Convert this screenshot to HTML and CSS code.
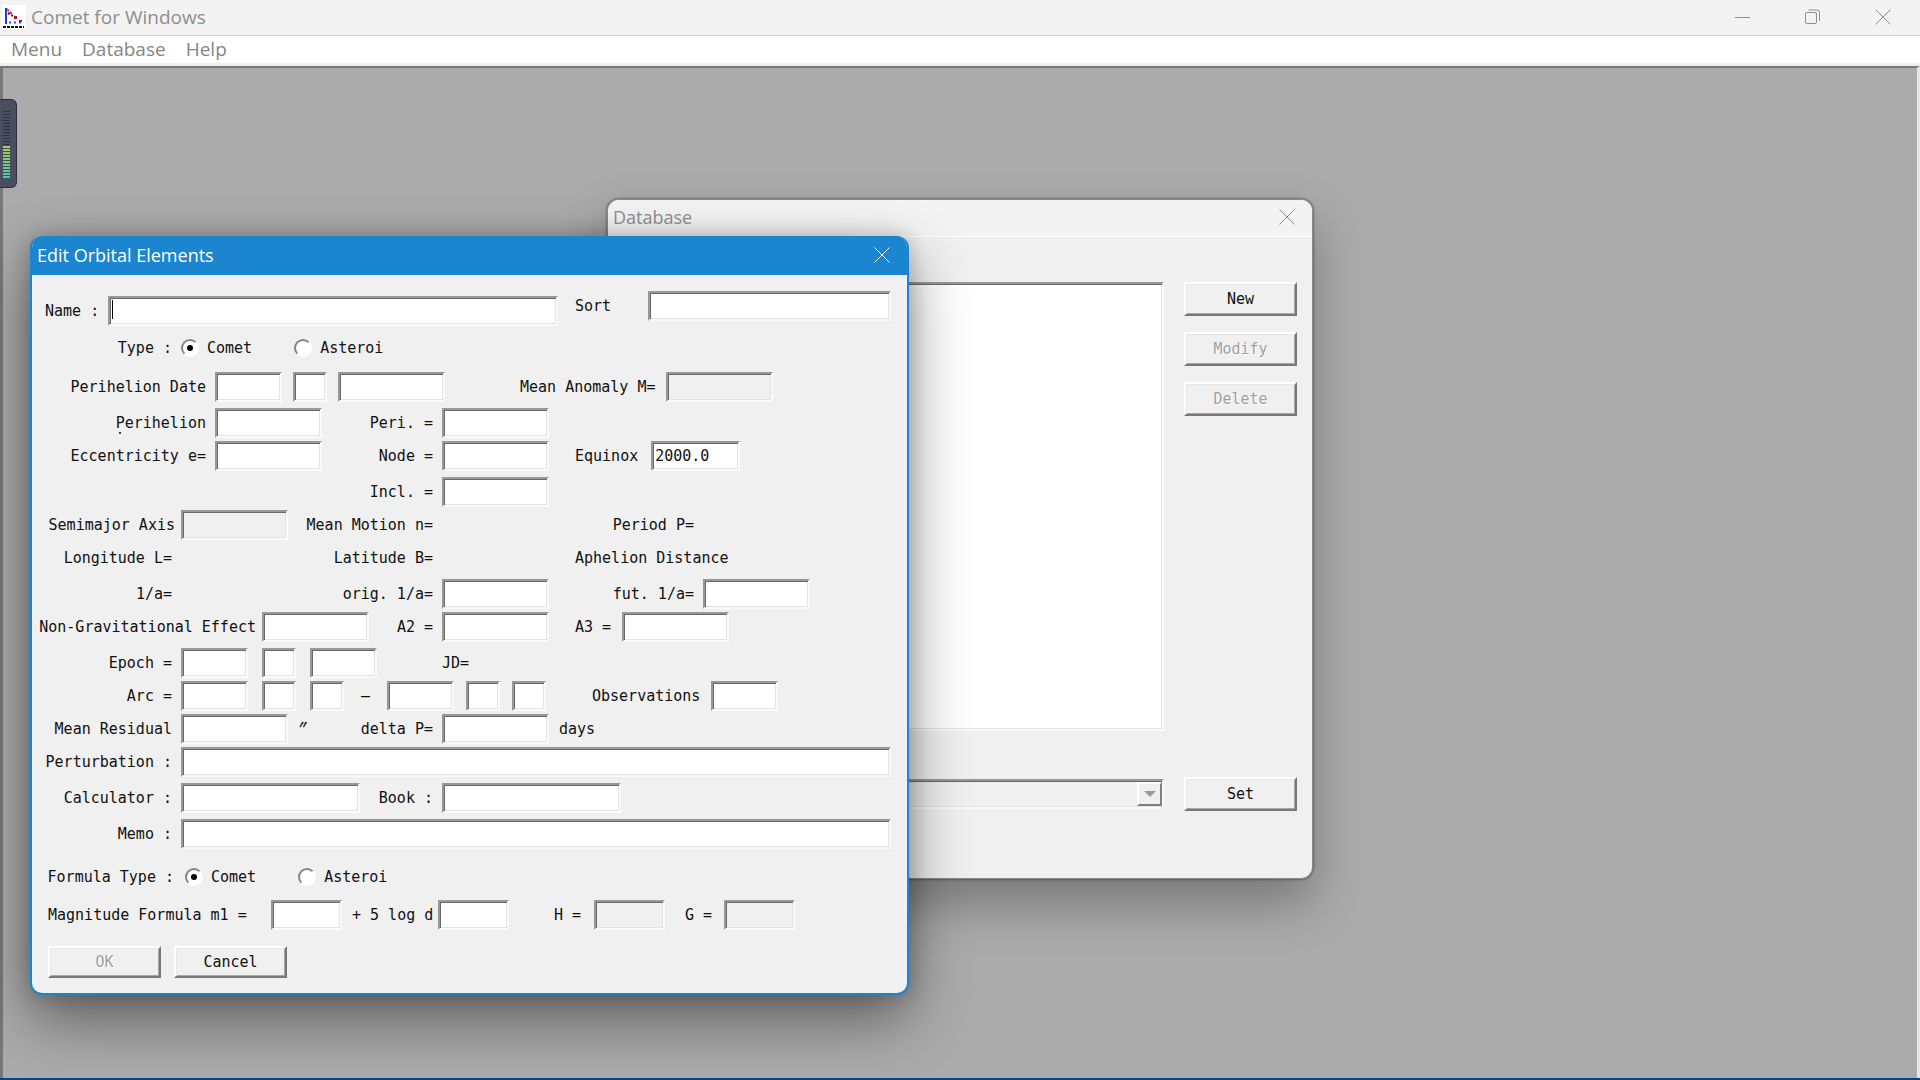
FILE: index.html
```html
<!DOCTYPE html>
<html lang="en">
<head>
<meta charset="utf-8">
<title>Comet for Windows</title>
<link rel="stylesheet" href="styles.css">
</head>
<body>
<div class="app">
  <header class="app-title">
    <svg class="app-icon" width="24" height="24" viewBox="0 0 24 24" aria-hidden="true">
      <path fill="#fff" d="M0 0h24v24H0z"/>
      <path stroke="#2a2af0" stroke-width="2" d="M4 3v16"/>
      <path stroke="#4040ff" stroke-width="2" stroke-dasharray="2 3" d="M7 17.500h12"/>
      <path stroke="#f03040" stroke-width="2" stroke-dasharray="3 1" d="M5 4l5 5"/>
      <path stroke="#402" stroke-width="2" stroke-dasharray="2 2" d="M6 8l5 3"/>
      <path fill="#c01020" d="M12 11h3v3h-3zM17 15h3v2h-3z"/>
      <path stroke="#111" stroke-width="2" stroke-dasharray="3 1" d="M1 22h21"/>
    </svg>
    <h1 class="title-text">Comet for Windows</h1>
    <div class="window-controls">
      <button class="icon-button" aria-label="Minimize"><svg width="16" height="16" viewBox="0 0 16 16"><path d="M0 8.500h15"/></svg></button>
      <button class="icon-button" aria-label="Restore"><svg width="16" height="16" viewBox="0 0 16 16"><rect x=".5" y="3.500" width="11" height="11" rx="1.500"/><path d="M3.500 1h8.500q2.500 0 2.500 2.500V12"/></svg></button>
      <button class="icon-button" aria-label="Close"><svg width="16" height="16" viewBox="0 0 16 16"><path d="M.5.5l15 15M15.500.5l-15 15"/></svg></button>
    </div>
  </header>
  <nav class="menu-bar">
    <a href="#menu">Menu</a>
    <a href="#database">Database</a>
    <a href="#help">Help</a>
  </nav>
  <main class="workspace"></main>
</div>

<div class="level-meter" aria-hidden="true"><span class="level-off"></span><span class="level-on"></span></div>

<section class="window database">
  <header class="window-title">
    <h2 class="title-text">Database</h2>
    <button class="icon-button" aria-label="Close"><svg width="16" height="16" viewBox="0 0 16 16"><path d="M.5.5l15 15M15.500.5l-15 15"/></svg></button>
  </header>
  <div class="database-body">
    <div class="sunken list"></div>
    <div class="button-stack">
      <button class="push">New</button>
      <button class="push" disabled>Modify</button>
      <button class="push" disabled>Delete</button>
    </div>
    <div class="combo">
      <select class="sunken combo-select" aria-label="Database file" disabled><option></option></select>
      <span class="combo-arrow"><svg width="12" height="6" viewBox="0 0 12 6"><path d="M0 0h12L6 6z"/></svg></span>
    </div>
    <button class="push">Set</button>
  </div>
</section>

<section class="window editor">
  <header class="window-title">
    <h2 class="title-text">Edit Orbital Elements</h2>
    <button class="icon-button" aria-label="Close"><svg width="16" height="16" viewBox="0 0 16 16"><path d="M.5.5l15 15M15.500.5l-15 15"/></svg></button>
  </header>
  <form class="form">
    <div class="row row-name">
      <div class="name-group"><label for="name">Name :</label><input id="name" class="sunken grow caret"></div>
      <label class="sort-label" for="sort">Sort</label><input id="sort" class="sunken sort">
    </div>
    <div class="row row-type">
      <span class="lead">Type :</span>
      <div class="radios">
        <label class="radio"><input type="radio" name="type" checked>Comet</label>
        <label class="radio"><input type="radio" name="type">Asteroi</label>
      </div>
    </div>
    <div class="row tall">
      <div class="date-group">
        <label class="lead wide" for="py">Perihelion Date</label>
        <div class="parts date-parts"><input id="py" class="sunken w-s"><input class="sunken w-xs" aria-label="Month"><input class="sunken w-m" aria-label="Day"></div>
      </div>
      <label class="end" for="mean">Mean Anomaly M=</label><input id="mean" class="sunken w-m" disabled>
    </div>
    <div class="row">
      <div class="left"><label class="lead wide speck" for="q">Perihelion</label><input id="q" class="sunken w-m"><label class="end" for="peri">Peri. =</label></div>
      <input id="peri" class="sunken w-m">
    </div>
    <div class="row tall">
      <div class="left"><label class="lead wide" for="ecc">Eccentricity e=</label><input id="ecc" class="sunken w-m"><label class="end" for="node">Node =</label></div>
      <div class="mid"><input id="node" class="sunken w-m"></div>
      <label class="gap-m" for="equinox">Equinox</label><input id="equinox" class="sunken w-eq" value="2000.0">
    </div>
    <div class="row">
      <div class="left"><label class="end" for="incl">Incl. =</label></div>
      <input id="incl" class="sunken w-m">
    </div>
    <div class="row">
      <div class="left"><label class="lead snug" for="axis">Semimajor Axis</label><input id="axis" class="sunken w-m" disabled><span class="end">Mean Motion n=</span></div>
      <div class="mid"></div>
      <span class="third">Period P=</span>
    </div>
    <div class="row tall">
      <div class="left"><span class="lead">Longitude L=</span><span class="end">Latitude B=</span></div>
      <div class="mid"></div>
      <span>Aphelion Distance</span>
    </div>
    <div class="row">
      <div class="left"><span class="lead">1/a=</span><label class="end" for="orig">orig. 1/a=</label></div>
      <div class="mid"><input id="orig" class="sunken w-m"></div>
      <label class="third" for="fut">fut. 1/a=</label><input id="fut" class="sunken w-m">
    </div>
    <div class="row tall">
      <div class="left"><label class="lead snug widest" for="a1">Non-Gravitational Effect</label><input id="a1" class="sunken w-m"><label class="end" for="a2">A2 =</label></div>
      <div class="mid"><input id="a2" class="sunken w-m"></div>
      <label class="end" for="a3">A3 =</label><input id="a3" class="sunken w-m">
    </div>
    <div class="row">
      <div class="left"><label class="lead" for="ey">Epoch =</label>
        <div class="parts"><input id="ey" class="sunken w-s"><input class="sunken w-xs" aria-label="Month"><input class="sunken w-s" aria-label="Day"></div></div>
      <span>JD=</span>
    </div>
    <div class="row">
      <div class="arc">
        <label class="lead" for="ay">Arc =</label>
        <div class="parts"><input id="ay" class="sunken w-s"><input class="sunken w-xs" aria-label="Start month"><input class="sunken w-xs" aria-label="Start day"><span class="dash">–</span>
          <div class="parts close"><input class="sunken w-s" aria-label="End year"><input class="sunken w-xs" aria-label="End month"><input class="sunken w-xs" aria-label="End day"></div></div>
      </div>
      <label class="end obs" for="obs">Observations</label><input id="obs" class="sunken w-s">
    </div>
    <div class="row">
      <div class="left"><label class="lead" for="res">Mean Residual</label><input id="res" class="sunken w-m"><span class="unit seconds">″</span><label class="end" for="dp">delta P=</label></div>
      <input id="dp" class="sunken w-m"><span class="unit">days</span>
    </div>
    <div class="row tall">
      <label class="lead" for="pert">Perturbation :</label><input id="pert" class="sunken grow">
    </div>
    <div class="row tall">
      <div class="left"><label class="lead" for="calc">Calculator :</label><input id="calc" class="sunken w-l"><label class="end" for="book">Book :</label></div>
      <input id="book" class="sunken w-l">
    </div>
    <div class="row row-memo">
      <label class="lead" for="memo">Memo :</label><input id="memo" class="sunken grow">
    </div>
    <div class="row row-formula">
      <span class="lead formula">Formula Type :</span>
      <div class="radios">
        <label class="radio"><input type="radio" name="formula" checked>Comet</label>
        <label class="radio"><input type="radio" name="formula">Asteroi</label>
      </div>
    </div>
    <div class="row row-magnitude">
      <label class="m1" for="m1">Magnitude Formula m1 =</label><input id="m1" class="sunken w-mag">
      <label class="log" for="log">+ 5 log d</label><input id="log" class="sunken w-mag">
      <label class="h" for="h">H =</label><input id="h" class="sunken w-mag" disabled>
      <label class="g" for="g">G =</label><input id="g" class="sunken w-mag" disabled>
    </div>
    <div class="actions">
      <button type="button" class="push" disabled>OK</button>
      <button type="button" class="push">Cancel</button>
    </div>
  </form>
</section>
</body>
</html>
```
FILE: styles.css
```css
* { box-sizing: border-box; }

body {
  margin: 0;
  font: 15px/20px "DejaVu Sans Mono", "Liberation Mono", monospace;
  color: #111;
}

button, input, select { font: inherit; color: inherit; margin: 0; }

/* Main application window */
.app {
  display: flex;
  flex-direction: column;
  height: 100vh;
  border-bottom: 2px solid #00468c;
}

.app-title {
  display: flex;
  align-items: center;
  height: 36px;
  padding: 0 0 2px 2px;
  background: #f3f3f3;
  border-bottom: 1px solid #cfcfcf;
  color: #8e8e8e;
}

.app-icon { margin-right: 5px; }

.title-text {
  flex: 1;
  margin: 0;
  font: 19px/28px "Open Sans", "Noto Sans", sans-serif;
}

.window-controls { display: flex; gap: 24px; padding-right: 14px; }

.icon-button {
  display: grid;
  place-items: center;
  width: 46px;
  height: 30px;
  padding: 0;
  border: 0;
  background: none;
}

.icon-button svg { fill: none; stroke: currentColor; stroke-width: 1; }

.menu-bar {
  display: flex;
  gap: 20px;
  height: 30px;
  padding: 0 11px;
  border-bottom: 3px solid #efefef;
  background: #fff;
  font: 19px/26px "Open Sans", "Noto Sans", sans-serif;
}

.menu-bar a { color: #858585; text-decoration: none; }

.workspace {
  flex: 1;
  border: solid #787878;
  border-width: 2px 0 0 3px;
  border-right: 3px solid #e6e6e6;
  background: #ababab;
}

.level-meter {
  position: absolute;
  top: 99px;
  left: 0;
  display: flex;
  flex-direction: column;
  width: 17px;
  height: 89px;
  padding: 11px 6px 9px 3px;
  border: 1px solid #2b2f3c;
  border-left: 0;
  border-radius: 0 6px 6px 0;
  background: #4a4f60;
}

.level-off { height: 35px; background: repeating-linear-gradient(#2f3340 0 1px, transparent 1px 3px); }
.level-on {
  flex: 1;
  background:
    repeating-linear-gradient(transparent 0 2px, #454a5a 2px 3px),
    linear-gradient(#b4c850, #46c8b4);
}

/* Floating windows */
.window { position: absolute; overflow: hidden; background: #f0f0f0; }

.window-title { display: flex; align-items: center; padding: 0 2px 2px 5px; }
.window-title .title-text { font-size: 18px; }

.database {
  top: 199px;
  left: 607px;
  width: 706px;
  border: 1px solid #8a8a8a;
  border-radius: 12px;
  box-shadow: 0 0 2px 1px rgba(0, 0, 0, .3), 0 24px 50px rgba(0, 0, 0, .3);
}

.database .window-title {
  height: 37px;
  background: #f3f3f3;
  border-bottom: 1px solid #fff;
  color: #8e8e8e;
}

.database-body {
  display: grid;
  grid-template-columns: 1fr 113px;
  gap: 46px 20px;
  padding: 45px 15px 67px 40px;
}

.button-stack { display: flex; flex-direction: column; gap: 16px; }

.combo { position: relative; display: flex; align-items: center; }
.combo-select { flex: 1; appearance: none; }
.combo-arrow {
  position: absolute;
  top: 5px;
  right: 2px;
  display: grid;
  place-items: center;
  width: 25px;
  height: 24px;
  border: 2px solid;
  border-color: #fff #808080 #808080 #fff;
  background: #f0f0f0;
}
.combo-arrow svg { fill: #9a9a9a; }

.editor {
  top: 236px;
  left: 30px;
  width: 879px;
  border: 2px solid #1b85cf;
  border-top: 0;
  border-radius: 12px;
  box-shadow: 0 24px 60px rgba(0, 0, 0, .45), 0 0 20px rgba(0, 0, 0, .2);
}

.editor .window-title { height: 39px; background: #1b85cf; color: #fff; }

/* Bevelled controls */
.sunken {
  height: 30px;
  padding: 0 2px;
  border: 2px solid;
  border-color: #989898 #fafafa #fafafa #989898;
  border-radius: 0;
  outline: 0;
  background: #fff;
  box-shadow: inset 1px 1px #696969, inset -1px -1px #e3e3e3;
}
.sunken.list { height: 449px; }
.sunken:disabled { background: #f0f0f0; opacity: 1; }

.push {
  width: 113px;
  height: 34px;
  padding: 0;
  border: 2px solid;
  border-color: #fff #787878 #787878 #fff;
  background: #f0f0f0;
  box-shadow: inset 1px 1px #e6e6e6, inset -1px -1px #a8a8a8;
}
.push:disabled { color: #a0a0a0; text-shadow: 1px 1px #fff; }

/* Orbital elements form */
.form { padding: 16px 16px 15px 0; white-space: nowrap; }

.row { display: flex; height: 33px; line-height: 30px; }
.row > div { display: flex; }
.tall { height: 36px; }
.row-name { height: 42px; }
.row-type { height: 39px; }
.row-memo { height: 43px; }
.row-formula { height: 38px; }
.row-magnitude { height: 46px; padding-left: 16px; }

.left { width: 410px; }
.mid { width: 133px; }
.date-group { width: 488px; }
.arc { width: 543px; }
.grow { flex: 1; min-width: 0; }

.lead { width: 149px; padding-right: 9px; text-align: right; }
.wide { width: 183px; }
.snug { padding-right: 6px; }
.widest { width: 230px; }
.formula { width: 153px; padding-right: 11px; }
.end { margin-left: auto; padding-right: 9px; }
.row > .end { margin-left: 0; padding-right: 11px; }
.third { width: 128px; padding-right: 9px; text-align: right; }
.gap-m { padding-right: 13px; }
.obs { padding-left: 17px; }
.unit { padding-left: 10px; }
.seconds { font: italic 20px/30px "Noto Sans", sans-serif; }

.parts { display: flex; gap: 14px; }
.close { gap: 12px; }
.date-parts { gap: 11px; }
.dash { width: 15px; text-align: center; }

.w-xs { width: 34px; }
.w-s { width: 67px; }
.w-mag { width: 71px; }
.w-eq { width: 89px; }
.w-m { width: 107px; }
.w-l { width: 179px; }

.row > .name-group { width: 526px; padding: 5px 0 0 13px; }
.name-group label { width: 63px; }
.name-group .sunken { height: 30px; }
.sort-label { width: 90px; padding-left: 17px; }
.sort { flex: 1; min-width: 0; }
.caret { background: linear-gradient(#000, #000) 2px 2px / 1px 19px no-repeat #fff; }

.speck { position: relative; }
.speck::after {
  content: "";
  position: absolute;
  top: 24px;
  left: 87px;
  width: 2px;
  height: 2px;
  background: #444;
}

.row > .radios { gap: 42px; }
.radio { display: flex; align-items: center; gap: 8px; height: 30px; }
.radio input {
  display: grid;
  place-items: center;
  width: 18px;
  height: 18px;
  appearance: none;
  border: 2px solid;
  border-color: #858585 #fff #fff #858585;
  border-radius: 50%;
  background: #fff;
}
.radio input:checked::before {
  content: "";
  width: 6px;
  height: 6px;
  border-radius: 50%;
  background: #000;
}

.m1 { width: 223px; }
.log { width: 96px; padding-left: 10px; }
.h { width: 85px; padding-left: 45px; }
.g { width: 59px; padding-left: 20px; }

.actions { display: flex; gap: 13px; padding-left: 16px; }
.actions .push { height: 32px; }
```
